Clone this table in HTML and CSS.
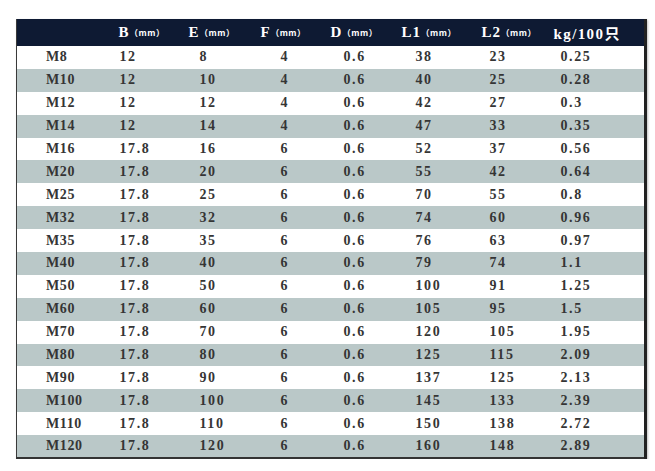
FILE: index.html
```html
<!DOCTYPE html>
<html>
<head>
<meta charset="utf-8">
<link rel="stylesheet" href="styles.css">
</head>
<body>
<div class="page">
<table class="spec">
<colgroup>
<col class="c1"><col class="c2"><col class="c3"><col class="c4"><col class="c5"><col class="c6"><col class="c7"><col class="c8">
</colgroup>
<thead>
<tr>
<th></th>
<th>B<span class="u">（mm）</span></th>
<th>E<span class="u">（mm）</span></th>
<th>F<span class="u">（mm）</span></th>
<th>D<span class="u">（mm）</span></th>
<th>L1<span class="u">（mm）</span></th>
<th>L2<span class="u">（mm）</span></th>
<th class="kg">kg/100只</th>
</tr>
</thead>
<tbody>
<tr><td>M8</td><td>12</td><td>8</td><td>4</td><td>0.6</td><td>38</td><td>23</td><td>0.25</td></tr>
<tr><td>M10</td><td>12</td><td>10</td><td>4</td><td>0.6</td><td>40</td><td>25</td><td>0.28</td></tr>
<tr><td>M12</td><td>12</td><td>12</td><td>4</td><td>0.6</td><td>42</td><td>27</td><td>0.3</td></tr>
<tr><td>M14</td><td>12</td><td>14</td><td>4</td><td>0.6</td><td>47</td><td>33</td><td>0.35</td></tr>
<tr><td>M16</td><td>17.8</td><td>16</td><td>6</td><td>0.6</td><td>52</td><td>37</td><td>0.56</td></tr>
<tr><td>M20</td><td>17.8</td><td>20</td><td>6</td><td>0.6</td><td>55</td><td>42</td><td>0.64</td></tr>
<tr><td>M25</td><td>17.8</td><td>25</td><td>6</td><td>0.6</td><td>70</td><td>55</td><td>0.8</td></tr>
<tr><td>M32</td><td>17.8</td><td>32</td><td>6</td><td>0.6</td><td>74</td><td>60</td><td>0.96</td></tr>
<tr><td>M35</td><td>17.8</td><td>35</td><td>6</td><td>0.6</td><td>76</td><td>63</td><td>0.97</td></tr>
<tr><td>M40</td><td>17.8</td><td>40</td><td>6</td><td>0.6</td><td>79</td><td>74</td><td>1.1</td></tr>
<tr><td>M50</td><td>17.8</td><td>50</td><td>6</td><td>0.6</td><td>100</td><td>91</td><td>1.25</td></tr>
<tr><td>M60</td><td>17.8</td><td>60</td><td>6</td><td>0.6</td><td>105</td><td>95</td><td>1.5</td></tr>
<tr><td>M70</td><td>17.8</td><td>70</td><td>6</td><td>0.6</td><td>120</td><td>105</td><td>1.95</td></tr>
<tr><td>M80</td><td>17.8</td><td>80</td><td>6</td><td>0.6</td><td>125</td><td>115</td><td>2.09</td></tr>
<tr><td>M90</td><td>17.8</td><td>90</td><td>6</td><td>0.6</td><td>137</td><td>125</td><td>2.13</td></tr>
<tr><td>M100</td><td>17.8</td><td>100</td><td>6</td><td>0.6</td><td>145</td><td>133</td><td>2.39</td></tr>
<tr><td>M110</td><td>17.8</td><td>110</td><td>6</td><td>0.6</td><td>150</td><td>138</td><td>2.72</td></tr>
<tr><td>M120</td><td>17.8</td><td>120</td><td>6</td><td>0.6</td><td>160</td><td>148</td><td>2.89</td></tr>
</tbody>
</table>
</div>
</body>
</html>
```
FILE: styles.css
```css
html, body {
  margin: 0;
  padding: 0;
  background: #ffffff;
}
.page {
  padding: 19px 10px 0 16px;
}
.spec {
  border-collapse: collapse;
  table-layout: fixed;
  width: 629px;
  border-left: 1px solid #3a3a3a;
  border-right: 3px solid #222222;
  border-bottom: 2px solid #333333;
  box-shadow: 1px 1px 2px rgba(0,0,0,0.25);
  font-family: "Liberation Serif", "Noto Sans CJK SC", serif;
  font-weight: bold;
  color: #353535;
}
.c1 { width: 94px; }
.c2 { width: 70px; }
.c3 { width: 70px; }
.c4 { width: 70px; }
.c5 { width: 72px; }
.c6 { width: 78px; }
.c7 { width: 75px; }
.c8 { width: 100px; }
.spec thead tr {
  background: #0e1a33;
  height: 27px;
}
.spec th {
  color: #ffffff;
  font-size: 15px;
  font-weight: bold;
  text-align: left;
  padding: 0;
  white-space: nowrap;
  letter-spacing: 1px;
}
.spec th:nth-child(2) { padding-left: 8px; }
.spec th:nth-child(3) { padding-left: 8px; }
.spec th:nth-child(4) { padding-left: 10px; }
.spec th:nth-child(5) { padding-left: 10px; }
.spec th:nth-child(6) { padding-left: 9px; }
.spec th:nth-child(7) { padding-left: 11px; }
.spec th:nth-child(8) { padding-left: 8px; }
.spec th.kg { letter-spacing: 1.4px; }
.u {
  font-family: "Noto Sans CJK SC", sans-serif;
  font-size: 8.5px;
  letter-spacing: 0.5px;
  vertical-align: 1px;
}
.spec tbody tr {
  height: 22.9px;
  background: #ffffff;
}
.spec tbody tr:nth-child(even) {
  background: #bac8c8;
}
.spec td {
  font-size: 14px;
  padding: 0;
  text-align: left;
  white-space: nowrap;
  line-height: 16px;
  letter-spacing: 1.6px;
}
.spec td:nth-child(1) { padding-left: 29px; letter-spacing: 0.6px; }
.spec td:nth-child(2) { padding-left: 9px; }
.spec td:nth-child(3) { padding-left: 19px; }
.spec td:nth-child(4) { padding-left: 30px; }
.spec td:nth-child(5) { padding-left: 23px; }
.spec td:nth-child(6) { padding-left: 23px; }
.spec td:nth-child(7) { padding-left: 19px; }
.spec td:nth-child(8) { padding-left: 15px; }
```
